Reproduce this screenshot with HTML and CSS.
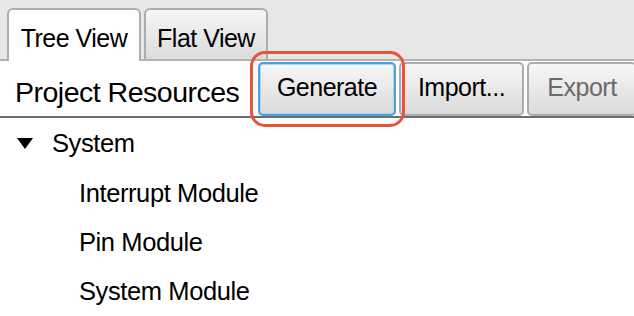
FILE: index.html
```html
<!DOCTYPE html>
<html>
<head>
<meta charset="utf-8">
<link rel="stylesheet" href="styles.css">
</head>
<body>
<div class="app">
  <div class="tabbar">
    <div class="tab tab-active">Tree View</div>
    <div class="tab tab-inactive">Flat View</div>
  </div>
  <div class="toolbar">
    <div class="label">Project Resources</div>
    <div class="buttons">
      <div class="btn-wrap">
        <button class="btn btn-generate">Generate</button>
        <span class="highlight"></span>
      </div>
      <button class="btn btn-import">Import...</button>
      <button class="btn btn-export">Export</button>
    </div>
  </div>
  <div class="tree">
    <div class="row row-parent">
      <svg class="caret" width="16" height="11" viewBox="0 0 16 11"><polygon points="0,0 16,0 8,11" fill="#000"/></svg>
      <span>System</span>
    </div>
    <div class="row row-child">Interrupt Module</div>
    <div class="row row-child">Pin Module</div>
    <div class="row row-child">System Module</div>
  </div>
</div>
</body>
</html>
```

FILE: styles.css
```css
* { box-sizing: border-box; }
html, body {
  margin: 0;
  padding: 0;
  background: #fff;
}
body {
  width: 634px;
  height: 316px;
  overflow: hidden;
  font-family: "Liberation Sans", Arial, sans-serif;
  color: #000;
}
.app {
  width: 634px;
  height: 316px;
  overflow: hidden;
}
.tabbar {
  height: 61px;
  background: #e7e7e7;
  border-bottom: 2px solid #b2b2b2;
  display: flex;
  align-items: flex-end;
  padding-left: 7px;
  gap: 3px;
}
.tab {
  font-size: 25px;
  letter-spacing: -0.5px;
  line-height: normal;
  text-align: center;
  border: 2px solid #adadad;
  border-bottom: none;
  border-radius: 6px 6px 0 0;
  padding-top: 14px;
}
.tab-active {
  width: 134px;
  height: 53px;
  margin-bottom: -2px;
  background: #fff;
}
.tab-inactive {
  width: 124px;
  height: 51px;
  background: linear-gradient(#f6f6f6, #dcdcdc);
}
.toolbar {
  height: 57px;
  display: flex;
  align-items: flex-start;
  border-bottom: 2px solid #6e6e6e;
}
.label {
  flex: 0 0 258px;
  padding-left: 15px;
  margin-top: 15px;
  font-size: 28.5px;
  letter-spacing: -0.5px;
  line-height: normal;
  white-space: nowrap;
}
.buttons {
  display: flex;
  gap: 3px;
  margin-top: 1px;
}
.btn-wrap {
  position: relative;
  display: flex;
}
.btn {
  height: 54px;
  font-family: "Liberation Sans", Arial, sans-serif;
  font-size: 25px;
  letter-spacing: -0.5px;
  line-height: normal;
  color: #000;
  border: 2px solid #acacac;
  border-radius: 5px;
  background: linear-gradient(#f7f7f7, #dadada);
  padding: 0 0 4px 0;
  margin: 0;
  flex: none;
}
.btn-generate {
  width: 138px;
  border-color: #4f9fd9;
  box-shadow: inset 0 0 0 1px #aed3f0;
}
.btn-import {
  width: 125px;
}
.btn-export {
  width: 110px;
  color: #6a6a6a;
}
.highlight {
  position: absolute;
  left: -8px;
  top: -11px;
  right: -9px;
  bottom: -11px;
  border: 3px solid #e8543a;
  border-radius: 15px;
  pointer-events: none;
}
.tree {
  padding-top: 1.4px;
  font-size: 25.5px;
  letter-spacing: -0.4px;
}
.row {
  height: 49.2px;
  line-height: 49.2px;
  white-space: nowrap;
}
.row-parent {
  display: flex;
  align-items: center;
  padding-left: 17px;
}
.caret {
  margin-right: 19px;
  flex: none;
}
.row-child {
  padding-left: 79px;
}
```
